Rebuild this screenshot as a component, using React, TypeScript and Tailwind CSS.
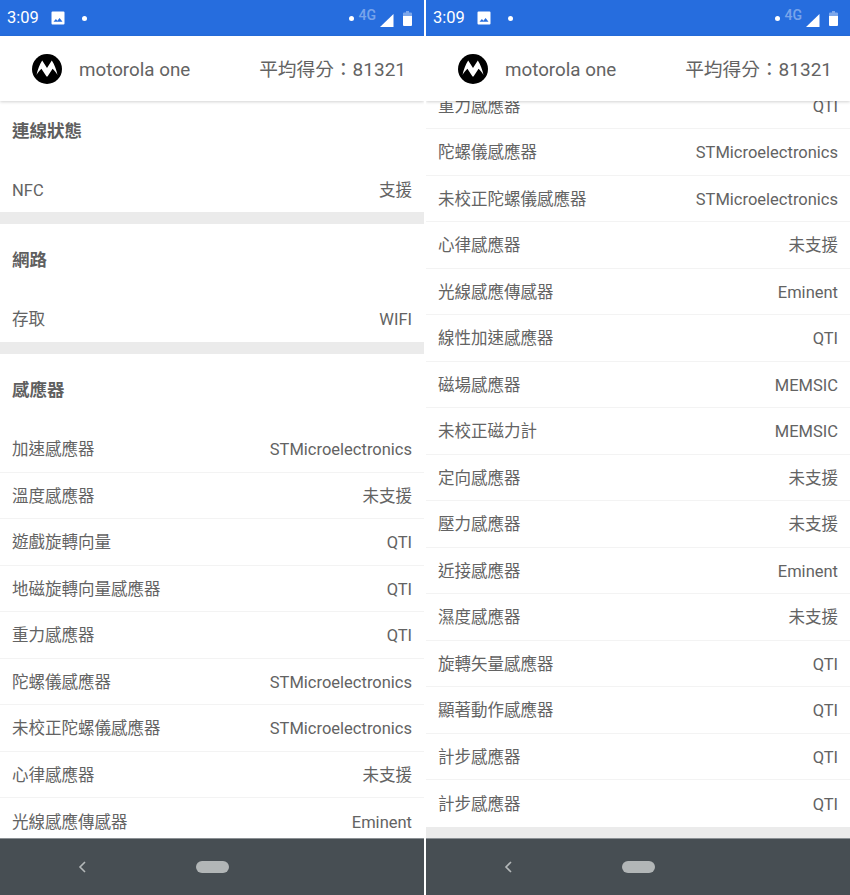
const font = "font-['Roboto','Noto_Sans_CJK_TC','Noto_Sans_CJK_SC',sans-serif]";

type Row = [string, string];

function SensorRow({ name, value, last, height }: { name: string; value: string; last?: boolean; height?: string }) {
  return (
    <div className={`${height ?? "h-[46.5px]"} shrink-0 flex items-center justify-between px-3 pt-[3.5px] text-[16.5px] text-[#636363] ${last ? "" : "border-b border-[#f3f3f3]"}`}>
      <span>{name}</span>
      <span>{value}</span>
    </div>
  );
}

function Section({ title, rows, height }: { title: string; rows: Row[]; height?: string }) {
  return (
    <section className="bg-white mb-3">
      <h2 className="h-[72px] flex items-center px-3 pt-[1px] text-[17.5px] font-bold text-[#5f5f5f]">{title}</h2>
      {rows.map((r, i) => (
        <SensorRow key={i} name={r[0]} value={r[1]} last={i === rows.length - 1} height={height} />
      ))}
    </section>
  );
}

function Logo() {
  return (
    <svg width="30" height="30" viewBox="0 0 30 30" className="shrink-0">
      <circle cx="15" cy="15" r="15" fill="#000" />
      <path
        d="M4.5 21 C5.5 16 7.5 10.5 10.2 6.5 L15 14 L19.8 6.5 C22.5 10.5 24.5 16 25.5 21 C24.2 18.6 22.6 16.6 20.6 14.8 L15.5 22.5 L14.5 22.5 L9.4 14.8 C7.4 16.6 5.8 18.6 4.5 21 Z"
        fill="#fff"
      />
    </svg>
  );
}

function Phone({ children }: { children: React.ReactNode }) {
  return (
    <div className={`w-[424px] h-[895px] flex flex-col overflow-hidden bg-[#ebebeb] ${font}`}>
      <div className="h-[36px] shrink-0 bg-[#266dde] flex items-center pl-[7px] pr-[12px] text-white">
        <span className="text-[16.5px] leading-none">3:09</span>
        <svg width="14" height="14" viewBox="0 0 14 14" className="ml-[12px]">
          <path fillRule="evenodd" d="M1.5 0.5h11a1 1 0 0 1 1 1v11a1 1 0 0 1-1 1h-11a1 1 0 0 1-1-1v-11a1 1 0 0 1 1-1ZM2.5 10.8h9L8.6 7l-2.2 2.8-1.5-1.8Z" fill="#fff" />
        </svg>
        <span className="ml-[17px] w-[5px] h-[5px] rounded-full bg-white" />
        <span className="ml-auto w-[5px] h-[5px] rounded-full bg-white" />
        <span className="ml-[5px] -mt-[6px] text-[14px] font-medium leading-none text-white/40">4G</span>
        <svg width="14" height="13" viewBox="0 0 14 13" className="ml-[4px] mt-[4px]">
          <path d="M13.5 0 V13 H0 Z" fill="#fff" />
        </svg>
        <svg width="9" height="15" viewBox="0 0 9 15" className="ml-[9px] mt-[1px]">
          <path d="M3 0h3v1.5h2a1 1 0 0 1 1 1V5H0V2.5a1 1 0 0 1 1-1h2Z" fill="#fff" fillOpacity="0.4" />
          <path d="M0 5h9v9a1 1 0 0 1-1 1H1a1 1 0 0 1-1-1Z" fill="#fff" />
        </svg>
      </div>
      <header className="relative z-10 h-[65px] shrink-0 bg-white flex items-center pl-[32px] pr-[18px] shadow-[0_1px_3px_rgba(0,0,0,0.18)] text-[#636363]">
        <Logo />
        <span className="ml-[17px] pt-[3px] text-[18.8px]">motorola one</span>
        <span className="ml-auto pt-[3px] flex items-center">
          <span className="text-[18.7px]">平均得分：</span>
          <span className="text-[19px]">81321</span>
        </span>
      </header>
      <main className="flex-1 min-h-0 overflow-hidden">{children}</main>
      <nav className="h-[57px] shrink-0 bg-[#474e53] border-t border-[#8b9094] flex items-center">
        <svg width="10" height="14" viewBox="0 0 10 14" className="ml-[77px] -mt-[1px]">
          <path d="M8 2 L3 7 L8 12" fill="none" stroke="#b4b8b9" strokeWidth="1.6" />
        </svg>
        <span className="ml-[109px] -mt-[1px] w-[33px] h-[12px] rounded-full bg-[#b2b6b7]" />
      </nav>
    </div>
  );
}

const sensorsA: Row[] = [
  ["加速感應器", "STMicroelectronics"],
  ["溫度感應器", "未支援"],
  ["遊戲旋轉向量", "QTI"],
  ["地磁旋轉向量感應器", "QTI"],
  ["重力感應器", "QTI"],
  ["陀螺儀感應器", "STMicroelectronics"],
  ["未校正陀螺儀感應器", "STMicroelectronics"],
  ["心律感應器", "未支援"],
  ["光線感應傳感器", "Eminent"],
];

const sensorsB: Row[] = [
  ["重力感應器", "QTI"],
  ["陀螺儀感應器", "STMicroelectronics"],
  ["未校正陀螺儀感應器", "STMicroelectronics"],
  ["心律感應器", "未支援"],
  ["光線感應傳感器", "Eminent"],
  ["線性加速感應器", "QTI"],
  ["磁場感應器", "MEMSIC"],
  ["未校正磁力計", "MEMSIC"],
  ["定向感應器", "未支援"],
  ["壓力感應器", "未支援"],
  ["近接感應器", "Eminent"],
  ["濕度感應器", "未支援"],
  ["旋轉矢量感應器", "QTI"],
  ["顯著動作感應器", "QTI"],
  ["計步感應器", "QTI"],
  ["計步感應器", "QTI"],
];

export default function App() {
  return (
    <div className="w-[850px] h-[895px] bg-white flex gap-[2px] overflow-hidden">
      <Phone>
        <div className="-mt-[6px]">
          <Section title="連線狀態" rows={[["NFC", "支援"]]} height="h-[45px]" />
          <Section title="網路" rows={[["存取", "WIFI"]]} height="h-[46px]" />
          <Section title="感應器" rows={sensorsA} />
        </div>
      </Phone>
      <Phone>
        <div className="-mt-[18.5px] bg-white">
          {sensorsB.map((r, i) => (
            <SensorRow key={i} name={r[0]} value={r[1]} last={i === sensorsB.length - 1} />
          ))}
        </div>
      </Phone>
    </div>
  );
}
